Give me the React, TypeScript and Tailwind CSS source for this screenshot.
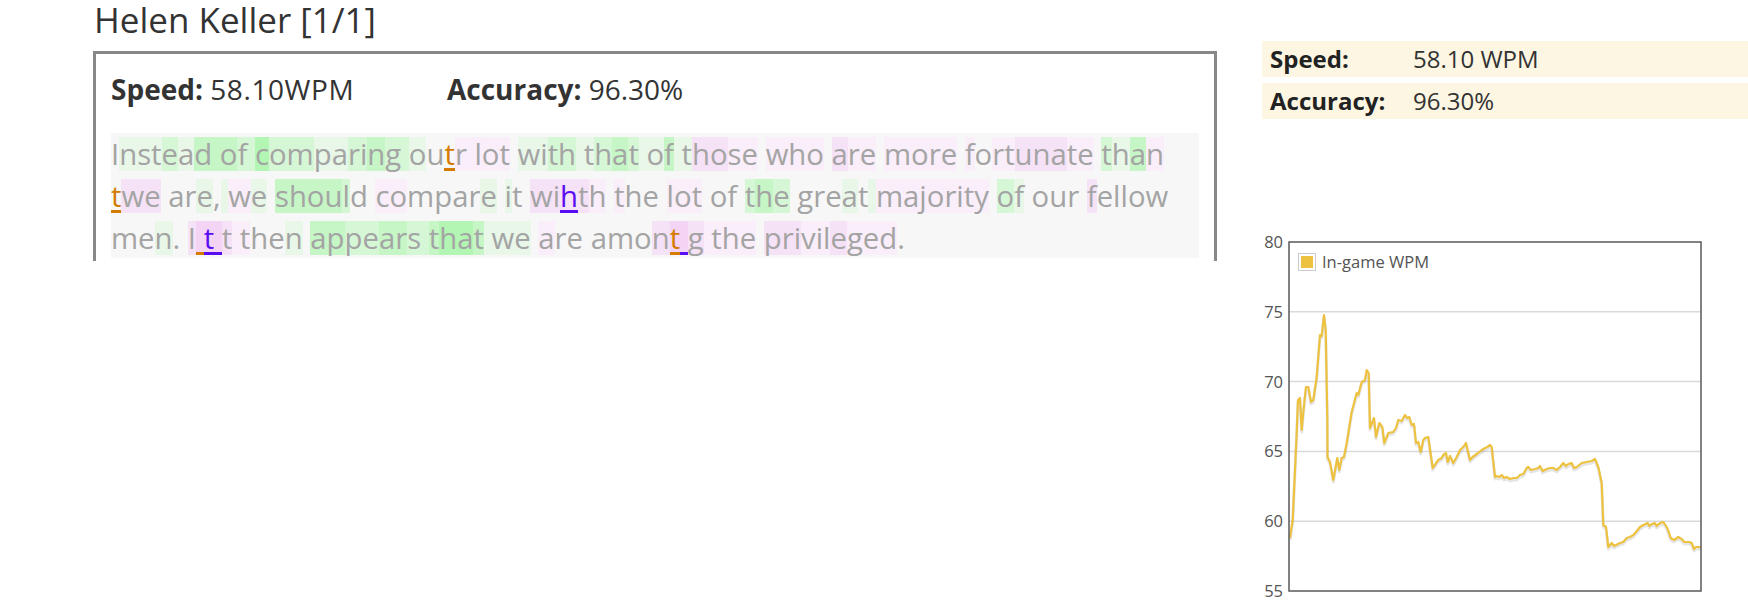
import React from 'react';

type Seg = [string, string, ('o' | 'p')?];

// per-character typing heat, grouped into runs
const bgClass: Record<string, string> = {
  '': '',
  g1: 'bg-[#e8f7e8]',
  g2: 'bg-[#d6f7d6]',
  g3: 'bg-[#c6f6c6]',
  g4: 'bg-[#b3f6b3]',
  p1: 'bg-[#f9eef9]',
  p2: 'bg-[#f6e2f6]',
  p3: 'bg-[#f3d4f5]',
};

const lines: Seg[][] = [
  [
    ['I', ''], ['nst', 'g1'], ['e', 'g2'], ['a', 'g1'], ['d o', 'g3'], ['f ', 'g2'], ['c', 'g4'], ['om', 'g2'],
    ['pa', 'g1'], ['ri', 'g2'], ['n', 'g3'], ['g ', 'g2'], ['o', 'g1'], ['u', ''], ['t', '', 'o'], ['r lot', 'p1'],
    [' ', ''], ['wi', 'g1'], ['th', 'g2'], [' t', 'g1'], ['h', 'g2'], ['a', 'g3'], ['t', 'g2'], [' o', 'g1'],
    ['f', 'g3'], [' t', 'g1'], ['ho', 'p2'], ['se', 'p1'], [' ', ''], ['who', 'p1'], [' ', ''], ['a', 'p2'],
    ['re', 'p1'], [' ', ''], ['more', 'p1'], [' ', ''], ['f', 'p1'], ['o', ''], ['rt', 'p1'], ['una', 'p2'],
    ['te', 'p1'], [' ', ''], ['t', 'g2'], ['h', 'g1'], ['a', 'g3'], ['n', 'p1'],
  ],
  [
    ['t', '', 'o'], ['we', 'p2'], [' ar', ''], ['e', 'g1'], [',', ''], [' ', 'g1'], ['w', 'p1'], ['e', 'g1'],
    [' ', ''], ['shou', 'g3'], ['l', 'g2'], ['d', ''], [' ', ''], ['co', 'p1'], ['mpar', ''], ['e', 'g1'],
    [' ', ''], ['i', 'g1'], ['t', ''], [' ', ''], ['wi', 'p2'], ['h', 'p2', 'p'], ['t', 'p2'], ['h', 'p1'],
    [' ', ''], ['t', 'p1'], ['he', ''], [' ', ''], ['lot', 'p1'], [' of ', ''], ['t', 'g2'], ['h', 'g3'],
    ['e', 'g2'], [' gre', ''], ['a', 'g1'], ['t', ''], [' ', 'g1'], ['majority', 'p1'], [' ', ''], ['o', 'g2'],
    ['f', 'g1'], [' our', ''], [' ', ''], ['f', 'p2'], ['ellow', ''],
  ],
  [
    ['me', ''], ['n', 'g1'], ['. ', ''], ['I', 'p2'], [' ', 'p3', 'o'], ['t', 'p3', 'p'], [' ', 'p3', 'p'],
    ['t', 'p2'], [' ', 'p1'], ['t', 'p1'], ['he', ''], ['n', 'g1'], [' ', ''], ['ap', 'g3'], ['pe', 'g2'],
    ['ar', 'g3'], ['s ', 'g2'], ['t', 'g3'], ['ha', 'g4'], ['t', 'g3'], [' we', 'g1'], [' ', ''], ['a', 'p1'],
    ['re', ''], [' ', ''], ['amo', ''], ['n', 'p2'], ['t', 'p3', 'o'], [' ', 'p3', 'p'], ['g', 'p2'],
    [' the', 'p1'], [' ', ''], ['pri', 'p2'], ['vil', 'p1'], ['e', 'p2'], ['ged', 'p1'], ['.', ''],
  ],
];

const wpm: [number, number][] = [
  [1290, 538], [1292.7, 520], [1296.7, 433], [1298, 400], [1300, 398], [1301.7, 430], [1303.5, 410],
  [1306, 387], [1308.3, 387], [1311, 402], [1313.3, 400], [1316.7, 377], [1320, 335], [1321.7, 336],
  [1324, 315], [1325.7, 330], [1327.3, 417], [1327.5, 457], [1330, 462], [1333.3, 480], [1337.3, 458],
  [1339.3, 470], [1341.7, 458], [1344, 457], [1346.7, 443], [1351.7, 412], [1356.7, 393], [1358.3, 395],
  [1361.7, 382], [1365, 380], [1366.7, 370], [1368.7, 373], [1370, 428], [1374, 418], [1376, 437],
  [1379.3, 423], [1382.3, 427], [1384.3, 443], [1388.3, 433], [1393.3, 432], [1396, 428], [1398.3, 420],
  [1401.7, 421], [1405, 415], [1407.3, 418], [1409.3, 417], [1411.7, 425], [1414, 424], [1416, 443],
  [1418.3, 442], [1420.7, 452], [1423.3, 440], [1425, 438], [1428.3, 437], [1432.7, 468], [1438.3, 460],
  [1441.7, 458], [1443.3, 455], [1446, 453], [1447.7, 462], [1450, 456], [1453.3, 463], [1456.7, 457],
  [1460, 450], [1463.3, 447], [1466, 443], [1470, 460], [1472.7, 457], [1476.7, 454], [1479.3, 452],
  [1481.7, 450], [1485, 448], [1487.3, 447], [1490, 445], [1491.7, 447], [1495, 477], [1496.7, 476],
  [1499.3, 477], [1501.7, 475], [1504, 478], [1506.7, 477], [1510, 479], [1513.3, 478], [1516.7, 478],
  [1520, 475], [1523.3, 474], [1526.7, 468], [1528.3, 467], [1531, 470], [1535, 469], [1538.3, 468],
  [1540, 466], [1542.7, 471], [1546.7, 469], [1550, 468], [1553.3, 468], [1556.7, 470], [1560, 467],
  [1563.3, 463], [1566, 466], [1568.3, 464], [1571.7, 463], [1574, 468], [1576.7, 467], [1581.7, 463],
  [1586.7, 462], [1591.7, 461], [1595, 459], [1598.3, 467], [1601.7, 483], [1603.3, 525], [1606, 527],
  [1608.3, 547], [1611.7, 543], [1614, 546], [1620, 543], [1623.3, 542], [1626.7, 538], [1630, 537],
  [1633.3, 535], [1636, 532], [1640, 527], [1643.3, 525], [1647.7, 523], [1649.3, 526], [1651.7, 524],
  [1655, 523], [1656.7, 526], [1660, 523], [1663.3, 522], [1667.3, 528], [1670.7, 538], [1674, 540],
  [1678.3, 537], [1681.7, 539], [1684.3, 542], [1689.3, 542], [1691.7, 543], [1694, 549], [1696, 547],
  [1701, 547],
];

const PLOT = { x: 1289, y: 242, w: 412, h: 349 };
const yFor = (v: number) => PLOT.y + ((80 - v) * PLOT.h) / 25;

function WpmChart() {
  const d = wpm.map(([x, y], i) => `${i ? 'L' : 'M'}${x} ${y}`).join(' ');
  return (
    <svg width={460} height={380} viewBox="1262 230 460 380" className="mt-[111px] block">
      <defs>
        <clipPath id="plot-clip">
          <rect x={PLOT.x} y={PLOT.y} width={PLOT.w} height={PLOT.h} />
        </clipPath>
      </defs>
      {[75, 70, 65, 60].map((v) => (
        <line key={v} x1={PLOT.x} x2={PLOT.x + PLOT.w} y1={yFor(v)} y2={yFor(v)} stroke="#dadada" strokeWidth={1.5} />
      ))}
      {[80, 75, 70, 65, 60, 55].map((v) => (
        <text
          key={v}
          x={1283}
          y={yFor(v) + 6}
          textAnchor="end"
          fontSize={16.5}
          fill="#545454"
          fontFamily="'Open Sans', sans-serif"
        >
          {v}
        </text>
      ))}
      <g clipPath="url(#plot-clip)">
        <path d={d} fill="none" stroke="rgba(0,0,0,0.1)" strokeWidth={3} transform="translate(0 2)" strokeLinejoin="round" />
        <path d={d} fill="none" stroke="#edc240" strokeWidth={2.2} strokeLinejoin="round" />
      </g>
      <rect x={PLOT.x} y={PLOT.y} width={PLOT.w} height={PLOT.h} fill="none" stroke="#585858" strokeWidth={1.5} />
      {/* legend */}
      <rect x={1298.5} y={253.5} width={17} height={17} fill="#fff" stroke="#cccccc" />
      <rect x={1301} y={256} width={12} height={12} fill="#edc240" />
      <text x={1322} y={268} fontSize={16.5} fill="#545454" fontFamily="'Open Sans', sans-serif">
        In-game WPM
      </text>
    </svg>
  );
}

export default function App() {
  return (
    <div className="flex w-[1748px] h-[612px] overflow-hidden bg-white font-['Open_Sans',sans-serif]">
      {/* Left: race result */}
      <div className="ml-[93px] w-[1124px] shrink-0 pt-[4px]">
        <h1 className="text-[35px] leading-[40px] -mt-[4px] text-[#333] pl-px">Helen Keller [1/1]</h1>
        <div className="mt-[11px] h-[210px] border-[3px] border-b-0 border-[#888] px-[15px]">
          <div className="flex mt-[14px] h-[42px] leading-[42px] text-[28px] text-[#333]">
            <div className="w-[336px]">
              <span className="font-bold">Speed:</span> <span className="tracking-[0.6px]">58.10WPM</span>
            </div>
            <div>
              <span className="font-bold">Accuracy:</span> 96.30%
            </div>
          </div>

          <div className="mt-[23px] bg-[#f7f7f7] pt-1 pb-[3px] text-[29.3px] text-[#a4a4a4] whitespace-pre">
            {lines.map((segs, li) => (
              <div key={li} className="flex h-[34px] leading-[34px] mb-2 last:mb-0">
                {segs.map(([t, bg, err], si) => (
                  <span
                    key={si}
                    className={[
                      bgClass[bg],
                      err === 'o' ? 'text-[#d47b00] border-b-[3px] border-[#d47b00]' : '',
                      err === 'p' ? 'text-[#5a0cf2] border-b-[3px] border-[#5a0cf2]' : '',
                    ].join(' ')}
                  >
                    {t}
                  </span>
                ))}
              </div>
            ))}
          </div>
        </div>
      </div>

      {/* Right: summary + chart */}
      <div className="ml-[45px] flex-1 pt-[41px]">
        <div className="flex flex-col gap-[6px] text-[24px] leading-[36px]">
          <div className="flex bg-[#fcf6e3] px-2">
            <div className="w-[143px] font-bold text-[#222]">Speed:</div>
            <div className="text-[#333]">58.10 WPM</div>
          </div>
          <div className="flex bg-[#fcf6e3] px-2">
            <div className="w-[143px] font-bold text-[#222]">Accuracy:</div>
            <div className="text-[#333]">96.30%</div>
          </div>
        </div>
        <WpmChart />
      </div>
    </div>
  );
}
